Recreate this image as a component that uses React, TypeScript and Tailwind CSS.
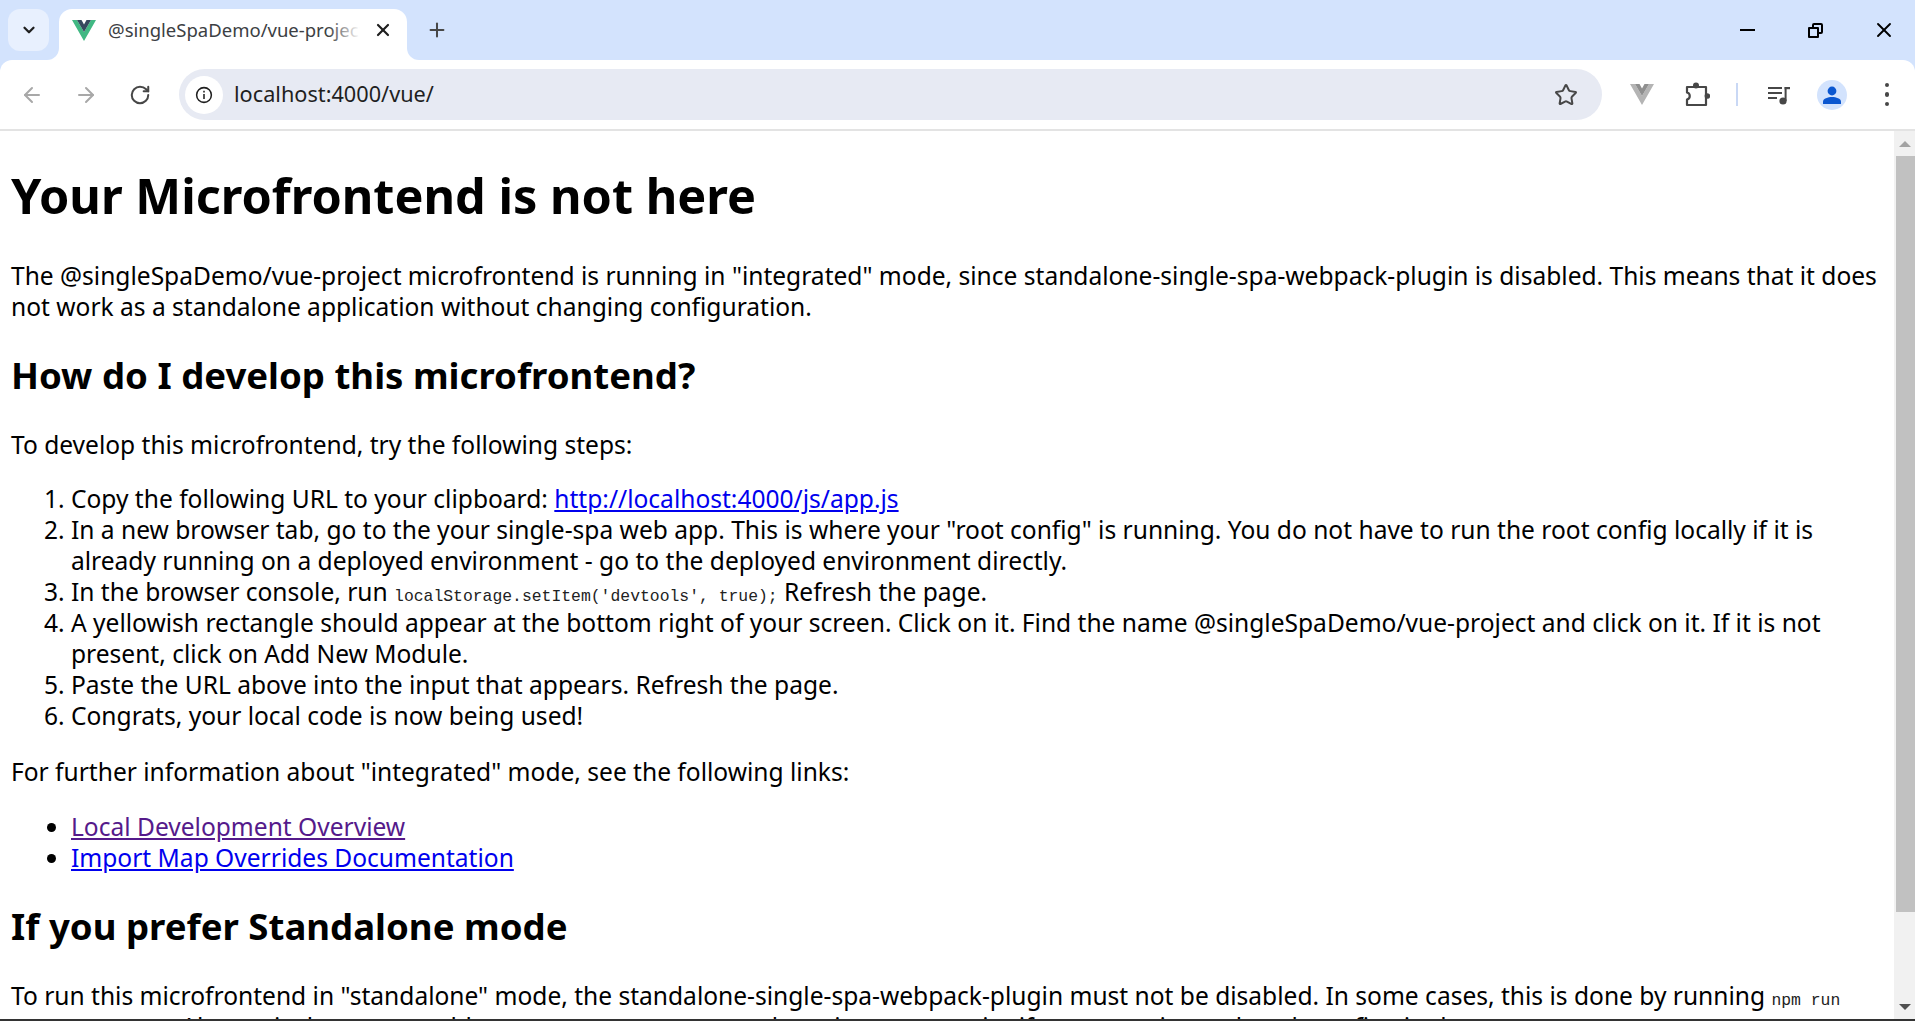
import React from 'react';
import { ArrowLeft, ArrowRight, ChevronDown, Plus, RotateCw, Star, X } from 'lucide-react';

const VueLogo = ({ gray }: { gray?: boolean }) => (
  <svg viewBox="0 0 24 21" className="h-[21px] w-[24px]">
    <path d="M0 0h5l7 12L19 0h5L12 21z" fill={gray ? '#b4b4b4' : '#41b883'} />
    <path d="M5 0h4.5L12 4.5 14.5 0H19l-7 12z" fill={gray ? '#8f8f8f' : '#35495e'} />
  </svg>
);

const Puzzle = () => (
  <svg viewBox="0 0 26 26" className="h-[26px] w-[26px]">
    <path d="M3 5h19v18H3v-5.5a3.6 3.6 0 0 0 0-7z" fill="none" stroke="#474747" strokeWidth="2.2" strokeLinejoin="round" />
    <circle cx="12" cy="3.6" r="3" fill="#474747" />
    <circle cx="23.4" cy="14" r="2.8" fill="#474747" />
  </svg>
);

const MediaIcon = () => (
  <svg viewBox="0 0 24 24" className="h-[24px] w-[24px]" fill="#474747">
    <rect x="1" y="4" width="14" height="2" />
    <rect x="1" y="9" width="14" height="2" />
    <rect x="1" y="14" width="9" height="2" />
    <circle cx="16" cy="18" r="3.6" />
    <rect x="17.6" y="4" width="2" height="14" />
    <rect x="17.6" y="4" width="5.4" height="2.2" />
  </svg>
);

const Avatar = () => (
  <div className="flex h-[30px] w-[30px] items-center justify-center rounded-full bg-[#d3e3fd]">
    <svg viewBox="0 0 20 20" className="h-[20px] w-[20px]" fill="#0b57d0">
      <circle cx="10" cy="6" r="4.4" />
      <path d="M1 19v-2.4C1 13.5 6 12 10 12s9 1.5 9 4.6V19z" />
    </svg>
  </div>
);

const TabStrip = () => (
  <div className="flex h-[60px] items-start bg-[#d3e3fd] pl-[8px] pt-[9px]">
    <div className="flex h-[42px] w-[41px] items-center justify-center rounded-[12px] bg-[#e8f0fe]">
      <ChevronDown size={18} strokeWidth={3} color="#1f1f1f" />
    </div>
    <div className="relative ml-[10px] flex h-[51px] w-[348px] items-center rounded-t-[13px] bg-white pb-[9px] pl-[13px]">
      <div className="absolute bottom-0 left-[-12px] h-[12px] w-[12px] bg-white">
        <div className="h-full w-full rounded-br-[12px] bg-[#d3e3fd]" />
      </div>
      <div className="absolute bottom-0 right-[-12px] h-[12px] w-[12px] bg-white">
        <div className="h-full w-full rounded-bl-[12px] bg-[#d3e3fd]" />
      </div>
      <VueLogo />
      <div className="relative ml-[12px] w-[252px] overflow-hidden whitespace-nowrap text-[18.5px] text-[#3c4043]">
        @singleSpaDemo/vue-project
        <div className="absolute inset-y-0 right-0 w-[32px] bg-gradient-to-r from-transparent to-white" />
      </div>
      <X size={20} strokeWidth={2.6} color="#1f1f1f" className="ml-[13px]" />
    </div>
    <Plus size={22} strokeWidth={2.2} color="#474747" className="ml-[19px] mt-[10px]" />
    <div className="ml-auto flex h-[42px] items-center pr-[19px]">
      <div className="h-[2px] w-[15px] bg-black" />
      <div className="relative ml-[53px] h-[15px] w-[15px]">
        <div className="absolute left-[4px] top-0 h-[11px] w-[11px] rounded-[2px] border-2 border-black" />
        <div className="absolute bottom-0 left-0 h-[11px] w-[11px] rounded-[1px] border-2 border-black bg-[#d3e3fd]" />
      </div>
      <X size={24} strokeWidth={1.9} color="#000" className="ml-[49px]" />
    </div>
  </div>
);

const Toolbar = () => (
  <div className="bg-[#d3e3fd]">
    <div className="flex h-[69px] items-center rounded-t-[12px] bg-white pl-[20px] pr-[26px]">
      <ArrowLeft size={24} strokeWidth={2} color="#a8a8a8" />
      <ArrowRight size={24} strokeWidth={2} color="#a8a8a8" className="ml-[30px]" />
      <RotateCw size={22} strokeWidth={2.2} color="#474747" className="ml-[31px]" />
      <div className="ml-[28px] flex h-[51px] flex-1 items-center rounded-full bg-[#e7eaf3] pl-[6px] pr-[24px]">
        <div className="flex h-[38px] w-[38px] items-center justify-center rounded-full bg-white">
          <svg viewBox="0 0 20 20" className="h-[18px] w-[18px]" fill="none" stroke="#1f1f1f" strokeWidth="1.7">
            <circle cx="10" cy="10" r="8.2" />
            <path d="M10 9v5.5M10 5.2v2" />
          </svg>
        </div>
        <span className="ml-[11px] text-[21.7px] text-[#1f1f1f]">localhost:4000/vue/</span>
        <Star size={24} strokeWidth={2} color="#474747" className="ml-auto" />
      </div>
      <div className="ml-[28px]"><VueLogo gray /></div>
      <div className="ml-[30px]"><Puzzle /></div>
      <div className="ml-[26px] h-[23px] w-[2px] bg-[#c9d8f5]" />
      <div className="ml-[29px]"><MediaIcon /></div>
      <div className="ml-[26px]"><Avatar /></div>
      <div className="ml-[38px] flex flex-col gap-[5px]">
        <div className="h-[4.5px] w-[4.5px] rounded-full bg-[#474747]" />
        <div className="h-[4.5px] w-[4.5px] rounded-full bg-[#474747]" />
        <div className="h-[4.5px] w-[4.5px] rounded-full bg-[#474747]" />
      </div>
    </div>
    <div className="h-[2px] bg-[#e3e3e3]" />
  </div>
);

const Scrollbar = () => (
  <div className="flex w-[21px] shrink-0 flex-col items-end bg-[#f1f1f1]">
    <div className="flex h-[25px] w-full items-center justify-center">
      <div className="h-0 w-0 border-x-[6px] border-b-[6px] border-x-transparent border-b-[#a3a3a3]" />
    </div>
    <div className="h-[756px] w-[19px] bg-[#c1c1c1]" />
    <div className="mt-auto flex h-[25px] w-full items-center justify-center">
      <div className="h-0 w-0 border-x-[6px] border-t-[6px] border-x-transparent border-t-[#505050]" />
    </div>
  </div>
);

const Code = ({ children }: { children: React.ReactNode }) => (
  <code className="font-['Liberation_Mono',monospace] text-[16.4px] leading-none text-[#222]">{children}</code>
);

export default function App() {
  return (
    <div className="flex h-[1021px] w-[1915px] flex-col overflow-hidden bg-white font-['Noto_Sans',sans-serif]">
      <TabStrip />
      <Toolbar />
      <div className="flex min-h-0 flex-1">
        <main className="min-w-0 flex-1 overflow-hidden pl-[11px] pr-[12px] text-[24.55px] leading-[31px] text-black">
          <h1 className="mb-[33px] mt-[33px] text-[48.6px] font-bold leading-[63px]">Your Microfrontend is not here</h1>
          <p>The @singleSpaDemo/vue-project microfrontend is running in "integrated" mode, since standalone-single-spa-webpack-plugin is disabled. This means that it does not work as a standalone application without changing configuration.</p>
          <h2 className="mb-[30px] mt-[30px] text-[36.6px] font-bold leading-[47px]">How do I develop this microfrontend?</h2>
          <p>To develop this microfrontend, try the following steps:</p>
          <ol className="mb-[25px] mt-[23px] list-decimal pl-[60px]">
            <li>Copy the following URL to your clipboard: <a href="#" className="text-[#0000ee] underline">http://localhost:4000/js/app.js</a></li>
            <li>In a new browser tab, go to the your single-spa web app. This is where your "root config" is running. You do not have to run the root config locally if it is already running on a deployed environment - go to the deployed environment directly.</li>
            <li>In the browser console, run <Code>localStorage.setItem('devtools', true);</Code> Refresh the page.</li>
            <li>A yellowish rectangle should appear at the bottom right of your screen. Click on it. Find the name @singleSpaDemo/vue-project and click on it. If it is not present, click on Add New Module.</li>
            <li>Paste the URL above into the input that appears. Refresh the page.</li>
            <li>Congrats, your local code is now being used!</li>
          </ol>
          <p>For further information about "integrated" mode, see the following links:</p>
          <ul className="mb-[23px] mt-[24px] list-disc pl-[60px]">
            <li><a href="#" className="text-[#551a8b] underline">Local Development Overview</a></li>
            <li><a href="#" className="text-[#0000ee] underline">Import Map Overrides Documentation</a></li>
          </ul>
          <h2 className="mb-[30px] mt-[30px] text-[36.6px] font-bold leading-[47px]">If you prefer Standalone mode</h2>
          <p>To run this microfrontend in "standalone" mode, the standalone-single-spa-webpack-plugin must not be disabled. In some cases, this is done by running <Code>npm run start:standalone</Code>. Alternatively you can add <Code>--env.standalone</Code> to your package.json start script if you are using webpack-config-single-spa.</p>
        </main>
        <Scrollbar />
      </div>
      <div className="h-[2px] bg-[#333]" />
    </div>
  );
}
